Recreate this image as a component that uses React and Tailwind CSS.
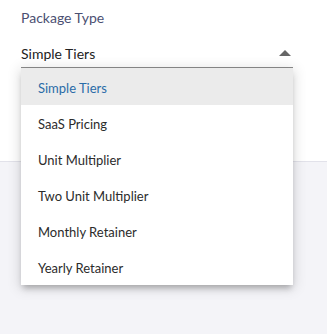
export default function App() {
  const items = [
    "Simple Tiers",
    "SaaS Pricing",
    "Unit Multiplier",
    "Two Unit Multiplier",
    "Monthly Retainer",
    "Yearly Retainer",
  ];
  return (
    <div
      className="w-[327px] h-[334px] bg-[#f4f4f8] overflow-hidden"
      style={{ fontFamily: "Lato, 'Noto Sans', sans-serif" }}
    >
      <div className="h-[162px] bg-white border-b border-[#e2e2ea] pl-[21px] pt-[8px]">
        <div className="text-[14px] leading-[20px] text-[#4b5072]">Package Type</div>
        <div className="relative w-[272px] mt-[14px]">
          <div className="flex items-center justify-between h-[26px] border-b border-[#8c8c8c] pb-[2px]">
            <span className="text-[14px] leading-[20px] text-[#222]">Simple Tiers</span>
            <svg width="12" height="6" viewBox="0 0 12 6" className="mr-[2px] mb-[2px]">
              <path d="M0 6 L6 0 L12 6 Z" fill="#666" />
            </svg>
          </div>
          <div className="absolute left-0 top-full w-full bg-white z-10 shadow-[0_5px_6px_-2px_rgba(0,0,0,0.25),0_2px_12px_2px_rgba(0,0,0,0.12)]">
            {items.map((t, i) => (
              <div
                key={t}
                className={
                  i === 0
                    ? "h-[37px] pt-[5px] flex items-center pl-[17px] text-[13px] bg-[#ebebeb] text-[#2a6ca8]"
                    : "h-[36px] pt-[4px] flex items-center pl-[17px] text-[13px] text-[#2b2b2b]"
                }
              >
                {t}
              </div>
            ))}
          </div>
        </div>
      </div>
    </div>
  );
}
